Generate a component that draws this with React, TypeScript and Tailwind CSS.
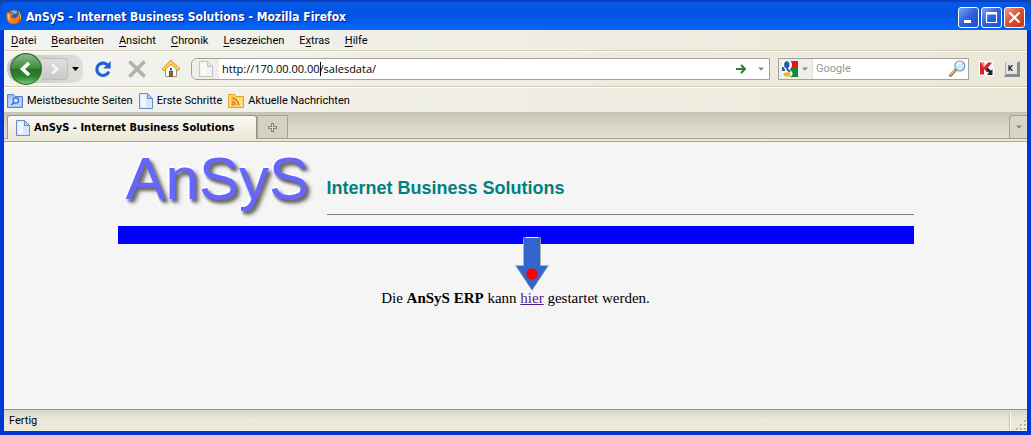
import React from "react";

const menus: [string, string, string][] = [
  ["", "D", "atei"],
  ["", "B", "earbeiten"],
  ["", "A", "nsicht"],
  ["", "C", "hronik"],
  ["", "L", "esezeichen"],
  ["E", "x", "tras"],
  ["", "H", "ilfe"],
];

function FirefoxIcon() {
  return (
    <svg width="16" height="16" viewBox="0 0 16 16" aria-hidden="true">
      <circle cx="8" cy="8" r="7.5" fill="#d9560f" />
      <circle cx="8.4" cy="6.3" r="5.4" fill="#2d62a8" />
      <path d="M5 2.500c2-1.500 5-1 6.500.5L9.500 5 7 4z" fill="#7fb8e6" />
      <path d="M1 2.500c0 1 .6 1.300 1.500 1.200L5 4l2 .5L6.500 6 5 7c.5 2 2.500 2.500 4.500 2 2-.5 2.500-2 3-4.500 1.500 2 1.500 6-.8 8.300C9 15.500 4 15.500 1.700 11.500.2 8.500.2 5.500 1 2.500z" fill="#ee7f1c" />
      <path d="M12.300 2.200C15 4.500 15.500 8 14.200 11c.2-3-.2-5-1.900-8.800zM2 5c-.6 3 .2 6 3 8-1.500-2.500-2-4.500-1.300-7z" fill="#ffd34a" />
    </svg>
  );
}

function PageIcon({ faded = false }: { faded?: boolean }) {
  return (
    <svg width="14" height="16" viewBox="0 0 14 16" aria-hidden="true" className="shrink-0">
      <path d="M.5.5h8l5 5v10H.5z" fill={faded ? "#f3f3f3" : "#d6e6fd"} stroke={faded ? "#c4c4c4" : "#6d8cc8"} />
      <path d="M2 2h5v12H2z" fill="#fff" opacity=".6" />
      <path d="M8.500.5v5h5z" fill={faded ? "#e5e5e5" : "#b5d0f4"} stroke={faded ? "#c4c4c4" : "#6d8cc8"} />
    </svg>
  );
}

function FolderSearchIcon() {
  return (
    <svg width="16" height="14" viewBox="0 0 16 14" aria-hidden="true" className="shrink-0">
      <path d="M.5 13.500V.5h6l1.500 2h7.500v11z" fill="#9bbdf3" stroke="#5781d3" />
      <path d="M1.500 4h13v8.500h-13z" fill="#bad3fa" />
      <circle cx="8.800" cy="6.500" r="2.700" fill="#d8e7ff" stroke="#3c66bd" strokeWidth="1.200" />
      <path d="M7 8.500 4.500 11" stroke="#3c66bd" strokeWidth="1.600" />
    </svg>
  );
}

function FeedIcon() {
  return (
    <svg width="16" height="14" viewBox="0 0 16 14" aria-hidden="true" className="shrink-0">
      <path d="M.5 13.500V.5h6l1.500 2h7.500v11z" fill="#ffd35b" stroke="#e2a32a" />
      <path d="M1.500 4h13v8.500h-13z" fill="#ffdf83" />
      <g fill="none" stroke="#ea7818" strokeWidth="1.700">
        <path d="M3.500 7.300a4.200 4.200 0 0 1 4.200 4.200M3.500 4.200a7.300 7.300 0 0 1 7.300 7.300" />
      </g>
      <circle cx="4.500" cy="10.500" r="1.300" fill="#ea7818" />
    </svg>
  );
}

function BackForward() {
  return (
    <div className="flex h-8 w-[76px] shrink-0 items-center">
      <div className="flex h-7 w-full items-center rounded-l-[14px] rounded-r-[10px] bg-linear-to-r from-[#c6c6c2] to-[#dededa]">
        <button aria-label="Zurück" className="ml-[3px] shrink-0">
          <svg width="32" height="32" viewBox="0 0 32 32" aria-hidden="true">
            <defs>
              <linearGradient id="backFill" x2="0" y2="1">
                <stop stopColor="#8ebd8c" />
                <stop offset=".48" stopColor="#3e8a40" />
                <stop offset=".5" stopColor="#237427" />
                <stop offset=".75" stopColor="#2d8430" />
                <stop offset="1" stopColor="#7fcb78" />
              </linearGradient>
            </defs>
            <circle cx="16" cy="16" r="15.300" fill="url(#backFill)" stroke="#2c6e30" strokeWidth="1.200" />
            <path d="M19 10 12.500 16l6.500 6" fill="none" stroke="#fff" strokeWidth="3.600" />
          </svg>
        </button>
        <button aria-label="Vor" className="flex h-[22px] w-[26px] shrink-0 items-center justify-center rounded-r-sm border border-l-0 border-[#bcbcb9] bg-linear-to-b from-[#dededc] to-[#c9c9c7]">
          <svg width="10" height="12" viewBox="0 0 10 12" aria-hidden="true">
            <path d="m2 1.500 5 4.500-5 4.500" fill="none" stroke="#f6f6f6" strokeWidth="2.800" />
          </svg>
        </button>
        <button aria-label="Verlauf" className="flex h-6 flex-1 items-center justify-center">
          <svg width="7" height="4" viewBox="0 0 7 4" aria-hidden="true"><path d="M0 0h7L3.500 4z" fill="#000" /></svg>
        </button>
      </div>
    </div>
  );
}

function Caret() {
  return (
    <svg width="6" height="4" viewBox="0 0 6 4" aria-hidden="true">
      <path d="M0 .5h6L3 3.800z" fill="#85857d" />
    </svg>
  );
}

function WindowButton({ label, close = false, children }: { label: string; close?: boolean; children: React.ReactNode }) {
  return (
    <button
      aria-label={label}
      className={
        "flex size-[21px] items-center justify-center rounded-[3px] border border-white " +
        (close ? "bg-linear-to-br from-[#f09a7f] via-[#de4d28] to-[#c13a13]" : "bg-linear-to-br from-[#7ba0f2] via-[#2c61dc] to-[#1c4fd0]")
      }
    >
      <svg width="15" height="15" viewBox="0 0 15 15" aria-hidden="true">{children}</svg>
    </button>
  );
}

function TitleBar() {
  return (
    <header className="flex h-[30px] items-center rounded-t-md bg-linear-to-b from-[#0a5be8] via-[#0054e3] to-[#0566fb] px-1.5 pt-1 shadow-[inset_0_2px_1px_#0a3fc0]">
      <FirefoxIcon />
      <h1 className="ml-1 flex-1 truncate font-['DejaVu_Sans_Condensed','DejaVu_Sans',sans-serif] text-[12px] font-bold text-white [text-shadow:1px_1px_#0a1f80]">
        AnSyS - Internet Business Solutions - Mozilla Firefox
      </h1>
      <div className="flex gap-0.5">
        <WindowButton label="Minimieren"><path d="M3 10h7v3H3z" fill="#fff" /></WindowButton>
        <WindowButton label="Maximieren"><path d="M2.500 3h10v9.500h-10z" fill="none" stroke="#fff" strokeWidth="1.200" /><path d="M2 2h11v2.500H2z" fill="#fff" /></WindowButton>
        <WindowButton label="Schließen" close><path d="m2.500 2.500 10 10m0-10-10 10" stroke="#fff" strokeWidth="2.200" /></WindowButton>
      </div>
    </header>
  );
}

function NavigationBar() {
  return (
    <div className="flex h-9 items-center border-b border-[#d2ceb7] pl-[3px] pr-[7px] shadow-[0_1px_#fff]">
      <BackForward />
      <button aria-label="Neu laden" className="ml-[11px]">
        <svg width="18" height="18" viewBox="0 0 18 18" aria-hidden="true">
          <path d="M13.500 5A6.200 6.200 0 1 0 14.800 11.500" fill="none" stroke="#1c62d4" strokeWidth="3.200" />
          <path d="M16.700 1v7.500H9.200z" fill="#1c62d4" />
        </svg>
      </button>
      <button aria-label="Stopp" className="ml-4">
        <svg width="18" height="18" viewBox="0 0 18 18" aria-hidden="true">
          <path d="m2.500 2.500 13 13m0-13-13 13" stroke="#b1b1ad" strokeWidth="3.600" strokeLinecap="round" />
        </svg>
      </button>
      <button aria-label="Startseite" className="ml-4">
        <svg width="18" height="18" viewBox="0 0 18 18" aria-hidden="true">
          <path d="M3.500 9v7.500h11V9L9 4z" fill="#fcfcf4" stroke="#9b958a" />
          <path d="M.8 10 9 2l8.200 8" fill="none" stroke="#c98b14" strokeWidth="3.400" />
          <path d="M1.200 9.700 9 2.200l7.800 7.500" fill="none" stroke="#ffce4d" strokeWidth="2.400" />
          <path d="M7.500 11h3v5.500h-3z" fill="#a06530" stroke="#573d28" strokeWidth=".8" />
          <path d="M8 8h2v2H8z" fill="#2b60a0" />
        </svg>
      </button>
      <div className="ml-[11px] flex h-[22px] min-w-0 flex-1 items-center rounded-l-md border border-[#a3a296] bg-white">
        <div className="flex h-full w-[27px] shrink-0 items-center justify-center rounded-l-md bg-[#efeee8]"><PageIcon faded /></div>
        <div className="ml-[3px] grid min-w-0 flex-1 items-center font-['Open_Sans',sans-serif]">
          <input aria-label="Adresse" defaultValue="http://170.00.00.00/salesdata/" className="col-start-1 row-start-1 w-full min-w-0 text-[11px] leading-5 text-black outline-none" />
          <div className="pointer-events-none col-start-1 row-start-1 flex items-center text-[11px] leading-5" aria-hidden="true">
            <span className="invisible">http://170.00.00.00</span>
            <span className="h-3.5 w-px bg-black" />
          </div>
        </div>
        <button aria-label="Adresse öffnen" className="mr-2">
          <svg width="12" height="10" viewBox="0 0 12 10" aria-hidden="true"><path d="M1 5h8M6 1l4 4-4 4" fill="none" stroke="#347a31" strokeWidth="2" /></svg>
        </button>
        <button aria-label="Adressliste" className="mr-0.5 flex size-3 items-center justify-center"><Caret /></button>
      </div>
      <div className="ml-2 flex h-[22px] w-[191px] shrink-0 items-center border border-[#a3a296] bg-white">
        <button aria-label="Suchmaschine" className="flex h-full w-[34px] shrink-0 items-center gap-1 border-r border-[#deddd5] bg-[#efeee8] pl-[3px]">
          <svg width="16" height="16" viewBox="0 0 16 16" aria-hidden="true" className="shrink-0">
            <path d="M0 0h16v16H0z" fill="#fff" />
            <path d="M8 0h8v7H8z" fill="#e91414" />
            <path d="M8 6h8v10H8z" fill="#108a3d" />
            <path d="M0 6h3v4H0z" fill="#2859b5" />
            <ellipse cx="5.500" cy="4" rx="4.500" ry="4.800" fill="#fff" />
            <ellipse cx="4.800" cy="3.800" rx="2.700" ry="3.500" fill="#2458b7" />
            <path d="M5 8c3 .5 6 2.500 5.500 5.500-.5 2-3 2.500-5.500 2.500-2 0-4-.5-4.500-2 0-2 2.500-3 5-3z" fill="#fff" />
            <ellipse cx="5" cy="13.500" rx="3.700" ry="2.200" fill="#f6b31b" />
            <path d="m4.500 7.500 3.500 3.500" stroke="#2458b7" strokeWidth="1.800" />
          </svg>
          <Caret />
        </button>
        <input aria-label="Suche" placeholder="Google" className="ml-[3px] min-w-0 flex-1 text-[11px] leading-5 outline-none placeholder:text-[#99988e]" />
        <button aria-label="Suchen" className="mr-0.5">
          <svg width="17" height="17" viewBox="0 0 17 17" aria-hidden="true">
            <path d="m6.500 10-5 5.500" stroke="#a87942" strokeWidth="3" strokeLinecap="round" />
            <path d="m6 10-4.500 4.800" stroke="#ecc492" strokeWidth="1.200" />
            <circle cx="10.800" cy="6" r="5" fill="#cfe8fc" stroke="#7797bb" strokeWidth="1.200" />
            <path d="M7.500 6a3.300 3.300 0 0 1 5-2.800" stroke="#fff" strokeWidth="1.500" fill="none" />
          </svg>
        </button>
      </div>
      <button aria-label="Link-Untersuchung" className="ml-2.5">
        <svg width="15" height="15" viewBox="0 0 15 15" aria-hidden="true">
          <path d="M0 0h14v7l1 1v7H7l-2-2v2H0z" fill="#fff" />
          <path d="M1 1.500h4.200V6L9 1.500h4.200L8.500 7l2.500 4H7.500L5 8v5.500H1z" fill="#d62129" />
          <path d="m2 1.500 3.200 6V1.500z" fill="#f18b8b" />
          <path d="m7.500 8 1.500-1.300 3 3L13.500 8v6H8l1.800-2z" fill="#222" />
        </svg>
      </button>
      <button aria-label="Virtuelle Tastatur" className="ml-2.5">
        <svg width="16" height="16" viewBox="0 0 16 16" aria-hidden="true">
          <path d="M0 0h16v16H0z" fill="#b0b0b0" />
          <path d="M0 0h15v1H1v14H0z" fill="#e6e6e6" />
          <path d="m0 16 3-3h10V2l3-2v16z" fill="#8a8a8a" />
          <path d="M2 1h11v12H2z" fill="#e3e3e3" />
          <path d="M5 4v6M8.500 4.200 5.500 7l3 2.800" fill="none" stroke="#222" strokeWidth="1.200" />
        </svg>
      </button>
    </div>
  );
}

function Bookmark({ icon, children }: { icon: React.ReactNode; children: string }) {
  return <a href="#" className="flex items-center gap-1">{icon}<span className="pt-px">{children}</span></a>;
}

export default function App() {
  return (
    <div className="flex min-h-screen flex-col bg-[#1f4a86] font-['Roboto','Noto_Sans',sans-serif] text-[11px] leading-4 text-black">
      <TitleBar />
      <div className="flex flex-1 flex-col border-x-4 border-b-4 border-[#0038d8] bg-[#ece9d8]">
        <div className="bg-linear-to-r from-[#f3f3f0] via-[#efede4] to-[#ece8d8]">
          <nav aria-label="Menü" className="flex h-[21px] items-center gap-[15px] border-b border-[#d2ceb7] pl-[7px] pt-0.5 shadow-[0_1px_#fff]">
            {menus.map(([before, key, after]) => (
              <button key={key}>{before}<span className="underline underline-offset-2">{key}</span>{after}</button>
            ))}
          </nav>
          <NavigationBar />
          <nav aria-label="Lesezeichen" className="flex h-[25px] items-center gap-1.5 pl-[3px] pt-0.5">
            <Bookmark icon={<FolderSearchIcon />}>Meistbesuchte Seiten</Bookmark>
            <Bookmark icon={<PageIcon />}>Erste Schritte</Bookmark>
            <Bookmark icon={<FeedIcon />}>Aktuelle Nachrichten</Bookmark>
          </nav>
        </div>

        <div className="flex h-[30px] flex-col bg-linear-to-b from-[#c5c3b3] via-[#dcd9ca] to-[#e4e1d2]">
          <div className="flex flex-1 items-end border-b border-[#a3a192] pl-[3px]">
            <button className="-mb-px flex h-6 w-[250px] items-center gap-1 rounded-t-[3px] border border-b-0 border-[#96948a] bg-linear-to-b from-[#faf9f5] to-[#ebe8d7] pl-2 font-['DejaVu_Sans_Condensed','DejaVu_Sans',sans-serif] font-bold">
              <PageIcon />
              <span className="whitespace-nowrap">AnSyS - Internet Business Solutions</span>
            </button>
            <button aria-label="Neuer Tab" className="flex h-[23px] w-[31px] items-center justify-center border border-b-0 border-[#a5a396] bg-[#d4d1c2]">
              <svg width="9" height="9" viewBox="0 0 9 9" aria-hidden="true"><path d="M3 0h3v3h3v3H6v3H3V6H0V3h3z" fill="#86857c" /><path d="M4 1h1v3h3v1H5v3H4V5H1V4h3z" fill="#d7d5cb" /></svg>
            </button>
            <button aria-label="Alle Tabs" className="ml-auto flex h-[23px] w-[18px] items-center justify-center rounded-tl-sm border-l border-t border-[#a3a192] bg-[#d8d5c6]"><Caret /></button>
          </div>
          <div className="h-[3px] border-b border-[#aaa899] bg-[#ebe8d8]" />
        </div>

        <main className="flex-1 bg-[#f5f5f5] px-4">
          <div className="mx-auto w-full max-w-[796px]">
            <div className="flex h-[84px] items-start">
              <div className="w-[209px] shrink-0 pl-2 font-['Liberation_Sans',sans-serif] text-[60px] leading-[74px] text-[#6666ff] [text-shadow:2px_3px_3px_#666,4px_4px_4px_#888,-2px_0_1px_#fff,0_-2px_1px_#fff,5px_6px_3px_#fff,6px_3px_3px_#fff,0_6px_3px_#fff]">AnSyS</div>
              <div className="mt-9 h-[37px] flex-1 border-b border-[#808080]">
                <h2 className="font-['Liberation_Sans',sans-serif] text-[18px] font-bold leading-5 text-[#008080]">Internet Business Solutions</h2>
              </div>
            </div>
            <div className="h-[18px] bg-[#0000ff]" />
            <p className="pt-[42px] text-center font-['Liberation_Serif',serif] text-[15px] leading-6">
              Die <strong>AnSyS ERP</strong> kann{" "}
              <span className="relative inline-block">
                <a href="#" className="text-[#551a8b] underline">hier</a>
                <svg width="34" height="54" viewBox="0 0 34 54" aria-hidden="true" className="absolute bottom-[19px] left-1/2 -translate-x-1/2">
                  <path d="M8.500.5h17v28h8L17 53.500.5 28.500h8z" fill="#3366cc" stroke="#b8bd9c" strokeWidth=".7" />
                  <path d="M11 .5h12" stroke="#ffffb8" />
                  <circle cx="17" cy="37" r="5.700" fill="#ff0000" />
                </svg>
              </span>{" "}
              gestartet werden.
            </p>
          </div>
        </main>

        <footer className="flex h-[22px] items-center border-t border-[#95927f] bg-linear-to-b from-[#d9d6c6] via-[#ece9d8] to-[#ebe8d7] pl-[5px]">
          <span className="flex-1">Fertig</span>
          <span className="h-[18px] w-0.5 border-l border-r border-l-[#c7c3b0] border-r-white" />
          <svg width="16" height="14" viewBox="0 0 16 14" aria-hidden="true" className="self-end">
            <path d="M6 12h2v2H6zm4-4h2v2h-2zm0 4h2v2h-2zm4-8h2v2h-2zm0 4h2v2h-2zm0 4h2v2h-2z" fill="#fff" />
            <path d="M5 11h2v2H5zm4-4h2v2H9zm0 4h2v2H9zm4-8h2v2h-2zm0 4h2v2h-2zm0 4h2v2h-2z" fill="#b8b4a2" />
          </svg>
        </footer>
      </div>
    </div>
  );
}
